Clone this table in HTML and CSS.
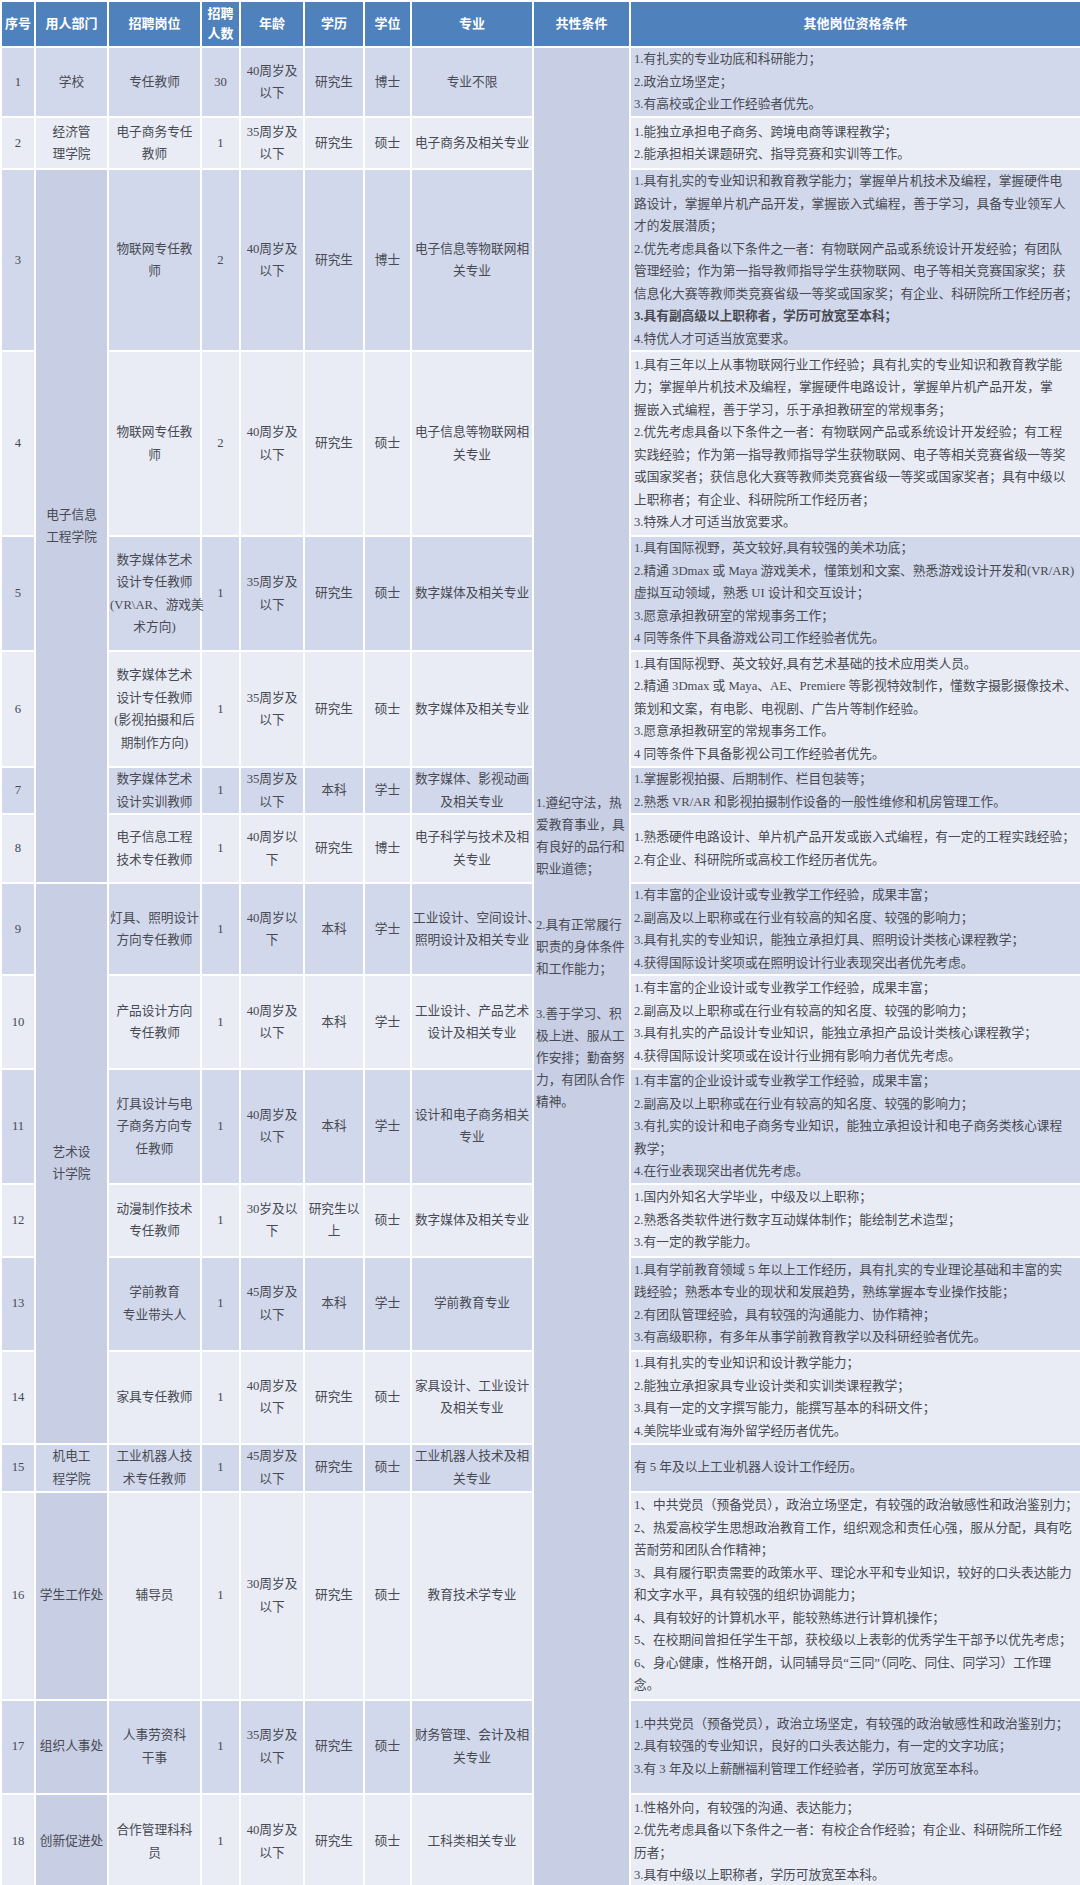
FILE: index.html
```html
<!DOCTYPE html>
<html lang="zh-CN">
<head>
<meta charset="utf-8">
<title>招聘岗位一览表</title>
<link rel="stylesheet" href="styles.css">
</head>
<body>
<table class="jobs">
<colgroup>
<col class="c-no"><col class="c-dept"><col class="c-post"><col class="c-num"><col class="c-age"><col class="c-edu"><col class="c-deg"><col class="c-major"><col class="c-common"><col class="c-other">
</colgroup>
<thead>
<tr class="head">
<th>序号</th><th>用人部门</th><th>招聘岗位</th><th>招聘<br>人数</th><th>年龄</th><th>学历</th><th>学位</th><th>专业</th><th>共性条件</th><th>其他岗位资格条件</th>
</tr>
</thead>
<tbody>
<tr class="odd r1">
<td>1</td><td>学校</td><td>专任教师</td><td>30</td><td>40周岁及<br>以下</td><td>研究生</td><td>博士</td><td>专业不限</td>
<td class="common dark" rowspan="18">
<p class="cp cp1">1.遵纪守法，热<br>爱教育事业，具<br>有良好的品行和<br>职业道德；</p>
<p class="cp cp2">2.具有正常履行<br>职责的身体条件<br>和工作能力；</p>
<p class="cp">3.善于学习、积<br>极上进、服从工<br>作安排；勤奋努<br>力，有团队合作<br>精神。</p>
</td>
<td class="req">1.有扎实的专业功底和科研能力；<br>2.政治立场坚定；<br>3.有高校或企业工作经验者优先。</td>
</tr>
<tr class="even r2">
<td>2</td><td>经济管<br>理学院</td><td>电子商务专任<br>教师</td><td>1</td><td>35周岁及<br>以下</td><td>研究生</td><td>硕士</td><td>电子商务及相关专业</td>
<td class="req">1.能独立承担电子商务、跨境电商等课程教学；<br>2.能承担相关课题研究、指导竞赛和实训等工作。</td>
</tr>
<tr class="odd r3">
<td>3</td><td class="dark" rowspan="6">电子信息<br>工程学院</td><td>物联网专任教<br>师</td><td>2</td><td>40周岁及<br>以下</td><td>研究生</td><td>博士</td><td>电子信息等物联网相<br>关专业</td>
<td class="req">1.具有扎实的专业知识和教育教学能力；掌握单片机技术及编程，掌握硬件电<br>路设计，掌握单片机产品开发，掌握嵌入式编程，善于学习，具备专业领军人<br>才的发展潜质；<br>2.优先考虑具备以下条件之一者：有物联网产品或系统设计开发经验；有团队<br>管理经验；作为第一指导教师指导学生获物联网、电子等相关竞赛国家奖；获<br>信息化大赛等教师类竞赛省级一等奖或国家奖；有企业、科研院所工作经历者；<br><b>3.具有副高级以上职称者，学历可放宽至本科；</b><br>4.特优人才可适当放宽要求。</td>
</tr>
<tr class="even r4">
<td>4</td><td>物联网专任教<br>师</td><td>2</td><td>40周岁及<br>以下</td><td>研究生</td><td>硕士</td><td>电子信息等物联网相<br>关专业</td>
<td class="req">1.具有三年以上从事物联网行业工作经验；具有扎实的专业知识和教育教学能<br>力；掌握单片机技术及编程，掌握硬件电路设计，掌握单片机产品开发，掌<br>握嵌入式编程，善于学习，乐于承担教研室的常规事务；<br>2.优先考虑具备以下条件之一者：有物联网产品或系统设计开发经验；有工程<br>实践经验；作为第一指导教师指导学生获物联网、电子等相关竞赛省级一等奖<br>或国家奖者；获信息化大赛等教师类竞赛省级一等奖或国家奖者；具有中级以<br>上职称者；有企业、科研院所工作经历者；<br>3.特殊人才可适当放宽要求。</td>
</tr>
<tr class="odd r5">
<td>5</td><td>数字媒体艺术<br>设计专任教师<br>(VR\AR、游戏美<br>术方向)</td><td>1</td><td>35周岁及<br>以下</td><td>研究生</td><td>硕士</td><td>数字媒体及相关专业</td>
<td class="req">1.具有国际视野，英文较好,具有较强的美术功底；<br>2.精通 3Dmax 或 Maya 游戏美术，懂策划和文案、熟悉游戏设计开发和(VR/AR)<br>虚拟互动领域，熟悉 UI 设计和交互设计；<br>3.愿意承担教研室的常规事务工作；<br>4 同等条件下具备游戏公司工作经验者优先。</td>
</tr>
<tr class="even r6">
<td>6</td><td>数字媒体艺术<br>设计专任教师<br>(影视拍摄和后<br>期制作方向)</td><td>1</td><td>35周岁及<br>以下</td><td>研究生</td><td>硕士</td><td>数字媒体及相关专业</td>
<td class="req">1.具有国际视野、英文较好,具有艺术基础的技术应用类人员。<br>2.精通 3Dmax 或 Maya、AE、Premiere 等影视特效制作，懂数字摄影摄像技术、<br>策划和文案，有电影、电视剧、广告片等制作经验。<br>3.愿意承担教研室的常规事务工作。<br>4 同等条件下具备影视公司工作经验者优先。</td>
</tr>
<tr class="odd r7">
<td>7</td><td>数字媒体艺术<br>设计实训教师</td><td>1</td><td>35周岁及<br>以下</td><td>本科</td><td>学士</td><td>数字媒体、影视动画<br>及相关专业</td>
<td class="req">1.掌握影视拍摄、后期制作、栏目包装等；<br>2.熟悉 VR/AR 和影视拍摄制作设备的一般性维修和机房管理工作。</td>
</tr>
<tr class="even r8">
<td>8</td><td>电子信息工程<br>技术专任教师</td><td>1</td><td>40周岁以<br>下</td><td>研究生</td><td>博士</td><td>电子科学与技术及相<br>关专业</td>
<td class="req">1.熟悉硬件电路设计、单片机产品开发或嵌入式编程，有一定的工程实践经验；<br>2.有企业、科研院所或高校工作经历者优先。</td>
</tr>
<tr class="odd r9">
<td>9</td><td class="dark" rowspan="6">艺术设<br>计学院</td><td>灯具、照明设计<br>方向专任教师</td><td>1</td><td>40周岁以<br>下</td><td>本科</td><td>学士</td><td>工业设计、空间设计、<br>照明设计及相关专业</td>
<td class="req">1.有丰富的企业设计或专业教学工作经验，成果丰富；<br>2.副高及以上职称或在行业有较高的知名度、较强的影响力；<br>3.具有扎实的专业知识，能独立承担灯具、照明设计类核心课程教学；<br>4.获得国际设计奖项或在照明设计行业表现突出者优先考虑。</td>
</tr>
<tr class="even r10">
<td>10</td><td>产品设计方向<br>专任教师</td><td>1</td><td>40周岁及<br>以下</td><td>本科</td><td>学士</td><td>工业设计、产品艺术<br>设计及相关专业</td>
<td class="req">1.有丰富的企业设计或专业教学工作经验，成果丰富；<br>2.副高及以上职称或在行业有较高的知名度、较强的影响力；<br>3.具有扎实的产品设计专业知识，能独立承担产品设计类核心课程教学；<br>4.获得国际设计奖项或在设计行业拥有影响力者优先考虑。</td>
</tr>
<tr class="odd r11">
<td>11</td><td>灯具设计与电<br>子商务方向专<br>任教师</td><td>1</td><td>40周岁及<br>以下</td><td>本科</td><td>学士</td><td>设计和电子商务相关<br>专业</td>
<td class="req">1.有丰富的企业设计或专业教学工作经验，成果丰富；<br>2.副高及以上职称或在行业有较高的知名度、较强的影响力；<br>3.有扎实的设计和电子商务专业知识，能独立承担设计和电子商务类核心课程<br>教学；<br>4.在行业表现突出者优先考虑。</td>
</tr>
<tr class="even r12">
<td>12</td><td>动漫制作技术<br>专任教师</td><td>1</td><td>30岁及以<br>下</td><td>研究生以<br>上</td><td>硕士</td><td>数字媒体及相关专业</td>
<td class="req">1.国内外知名大学毕业，中级及以上职称；<br>2.熟悉各类软件进行数字互动媒体制作；能绘制艺术造型；<br>3.有一定的教学能力。</td>
</tr>
<tr class="odd r13">
<td>13</td><td>学前教育<br>专业带头人</td><td>1</td><td>45周岁及<br>以下</td><td>本科</td><td>学士</td><td>学前教育专业</td>
<td class="req">1.具有学前教育领域 5 年以上工作经历，具有扎实的专业理论基础和丰富的实<br>践经验；熟悉本专业的现状和发展趋势，熟练掌握本专业操作技能；<br>2.有团队管理经验，具有较强的沟通能力、协作精神；<br>3.有高级职称，有多年从事学前教育教学以及科研经验者优先。</td>
</tr>
<tr class="even r14">
<td>14</td><td>家具专任教师</td><td>1</td><td>40周岁及<br>以下</td><td>研究生</td><td>硕士</td><td>家具设计、工业设计<br>及相关专业</td>
<td class="req">1.具有扎实的专业知识和设计教学能力；<br>2.能独立承担家具专业设计类和实训类课程教学；<br>3.具有一定的文字撰写能力，能撰写基本的科研文件；<br>4.美院毕业或有海外留学经历者优先。</td>
</tr>
<tr class="odd r15">
<td>15</td><td>机电工<br>程学院</td><td>工业机器人技<br>术专任教师</td><td>1</td><td>45周岁及<br>以下</td><td>研究生</td><td>硕士</td><td>工业机器人技术及相<br>关专业</td>
<td class="req">有 5 年及以上工业机器人设计工作经历。</td>
</tr>
<tr class="even r16">
<td>16</td><td class="dark">学生工作处</td><td>辅导员</td><td>1</td><td>30周岁及<br>以下</td><td>研究生</td><td>硕士</td><td>教育技术学专业</td>
<td class="req">1、中共党员（预备党员），政治立场坚定，有较强的政治敏感性和政治鉴别力；<br>2、热爱高校学生思想政治教育工作，组织观念和责任心强，服从分配，具有吃<br>苦耐劳和团队合作精神；<br>3、具有履行职责需要的政策水平、理论水平和专业知识，较好的口头表达能力<br>和文字水平，具有较强的组织协调能力；<br>4、具有较好的计算机水平，能较熟练进行计算机操作；<br>5、在校期间曾担任学生干部，获校级以上表彰的优秀学生干部予以优先考虑；<br>6、身心健康，性格开朗，认同辅导员“三同”（同吃、同住、同学习）工作理<br>念。</td>
</tr>
<tr class="odd r17">
<td>17</td><td class="dark">组织人事处</td><td>人事劳资科<br>干事</td><td>1</td><td>35周岁及<br>以下</td><td>研究生</td><td>硕士</td><td>财务管理、会计及相<br>关专业</td>
<td class="req">1.中共党员（预备党员），政治立场坚定，有较强的政治敏感性和政治鉴别力；<br>2.具有较强的专业知识，良好的口头表达能力，有一定的文字功底；<br>3.有 3 年及以上薪酬福利管理工作经验者，学历可放宽至本科。</td>
</tr>
<tr class="even r18">
<td>18</td><td class="dark">创新促进处</td><td>合作管理科科<br>员</td><td>1</td><td>40周岁及<br>以下</td><td>研究生</td><td>硕士</td><td>工科类相关专业</td>
<td class="req">1.性格外向，有较强的沟通、表达能力；<br>2.优先考虑具备以下条件之一者：有校企合作经验；有企业、科研院所工作经<br>历者；<br>3.具有中级以上职称者，学历可放宽至本科。</td>
</tr>
</tbody>
</table>
</body>
</html>
```
FILE: styles.css
```css
html, body {
  margin: 0;
  padding: 0;
  background: #ffffff;
}

.jobs {
  width: 1080px;
  border-collapse: collapse;
  table-layout: fixed;
  font-family: "Liberation Serif", "Noto Sans CJK SC", serif;
  font-size: 12.7px;
  line-height: 22.5px;
  color: #474a52;
}

.c-no { width: 34px; }
.c-dept { width: 73px; }
.c-post { width: 93px; }
.c-num { width: 39px; }
.c-age { width: 64px; }
.c-edu { width: 60px; }
.c-deg { width: 47px; }
.c-major { width: 122px; }
.c-common { width: 97px; }
.c-other { width: 451px; }

.jobs th,
.jobs td {
  border: 2px solid #ffffff;
  padding: 0 1px;
  text-align: center;
  vertical-align: middle;
  white-space: nowrap;
}

.jobs th {
  background: #4f81bd;
  color: #ffffff;
  font-weight: bold;
  font-size: 13px;
  line-height: 20px;
}

.head { height: 46px; }

.odd td { background: #d2d8eb; }
.even td { background: #e9ecf5; }
.jobs td.dark { background: #c8cee4; }

.jobs td.req {
  text-align: left;
  padding: 0 0 0 3px;
  overflow: hidden;
}

.jobs td.common {
  text-align: left;
  vertical-align: top;
  padding: 744px 0 0 2px;
  line-height: 22px;
}

.cp { margin: 0; }
.cp1 { margin-bottom: 34px; }
.cp2 { margin-bottom: 23px; }

.r1 { height: 70px; }
.r2 { height: 52px; }
.r3 { height: 182px; }
.r4 { height: 185px; }
.r5 { height: 115px; }
.r6 { height: 116px; }
.r7 { height: 47px; }
.r8 { height: 69px; }
.r9 { height: 92px; }
.r10 { height: 94px; }
.r11 { height: 114px; }
.r12 { height: 73px; }
.r13 { height: 94px; }
.r14 { height: 93px; }
.r15 { height: 48px; }
.r16 { height: 208px; }
.r17 { height: 94px; }
.r18 { height: 96px; }
```
